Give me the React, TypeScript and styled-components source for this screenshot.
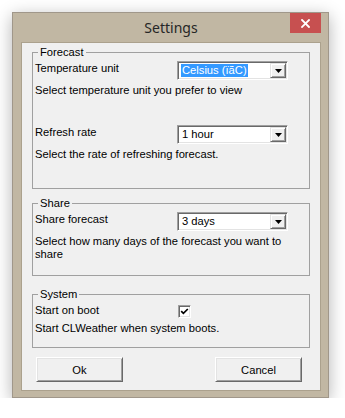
import React from "react";
import styled, { createGlobalStyle } from "styled-components";

const GlobalStyle = createGlobalStyle`
  html, body {
    margin: 0;
    background: #ffffff;
  }
  body {
    font-family: "Liberation Sans", Arial, sans-serif;
    font-size: 11.2px;
    color: #000;
  }
`;

export default function App() {
  return (
    <>
      <GlobalStyle />
      <Window>
        <TitleBar>
          <Title>Settings</Title>
          <CloseButton aria-label="Close">
            <svg width="9" height="9" viewBox="0 0 9 9">
              <path d="M1 1 L8 8 M8 1 L1 8" stroke="#fff" strokeWidth="1.8" strokeLinecap="square" />
            </svg>
          </CloseButton>
        </TitleBar>
        <Client>
          <Group $h={143} $mt={0}>
            <Legend>Forecast</Legend>
            <Setting $mt={0}>
              <Label>Temperature unit</Label>
              <Combo value="Celsius (ïãC)" selected />
              <Desc>Select temperature unit you prefer to view</Desc>
            </Setting>
            <Setting $mt={28}>
              <Label>Refresh rate</Label>
              <Combo value="1 hour" />
              <Desc>Select the rate of refreshing forecast.</Desc>
            </Setting>
          </Group>
          <Group $h={79} $mt={8}>
            <Legend>Share</Legend>
            <Setting $mt={0}>
              <Label>Share forecast</Label>
              <Combo value="3 days" />
              <Desc>
                Select how many days of the forecast you want to
                <br />
                share
              </Desc>
            </Setting>
          </Group>
          <Group $h={60} $mt={12}>
            <Legend>System</Legend>
            <Setting $mt={0}>
              <Label>Start on boot</Label>
              <CheckBox>
                <svg width="9" height="9" viewBox="0 0 9 9">
                  <path d="M1.2 4.2 L3.4 6.4 L7.8 2" stroke="#000" strokeWidth="1.7" fill="none" />
                </svg>
              </CheckBox>
              <Desc>Start CLWeather when system boots.</Desc>
            </Setting>
          </Group>
          <ButtonRow>
            <DialogButton>Ok</DialogButton>
            <DialogButton>Cancel</DialogButton>
          </ButtonRow>
        </Client>
      </Window>
    </>
  );
}

function Combo({ value, selected }: { value: string; selected?: boolean }) {
  return (
    <ComboBox>
      <ComboText>
        <ComboValue $selected={!!selected}>{value}</ComboValue>
      </ComboText>
      <DropButton>
        <svg width="7" height="4" viewBox="0 0 7 4">
          <polygon points="0,0 7,0 3.5,4" fill="#000" />
        </svg>
      </DropButton>
    </ComboBox>
  );
}

const Window = styled.div`
  margin: 12px 0 0 12px;
  width: 317px;
  box-sizing: border-box;
  background: #c1b7a3;
  border: 1px solid #a0978a;
  box-shadow: 0 4px 16px rgba(0, 0, 0, 0.3);
  display: flex;
  flex-direction: column;
  padding: 0 7px 6px 8px;
`;

const TitleBar = styled.div`
  height: 29px;
  display: grid;
  grid-template-columns: 1fr auto 1fr;
  align-items: center;
`;

const Title = styled.div`
  grid-column: 2;
  font-family: "Noto Sans", "Open Sans", sans-serif;
  font-size: 14px;
  color: #262626;
  line-height: 29px;
`;

const CloseButton = styled.button`
  grid-column: 3;
  justify-self: end;
  align-self: start;
  width: 31px;
  height: 20px;
  padding: 0;
  border: none;
  background: #c75050;
  display: flex;
  align-items: center;
  justify-content: center;
`;

const Client = styled.div`
  background: #f0f0f0;
  border: 1px solid #aba18d;
  padding: 3px 10px 8px 10px;
  display: flex;
  flex-direction: column;
`;

const Group = styled.fieldset<{ $h: number; $mt: number }>`
  margin: ${(p) => p.$mt}px 0 0;
  padding: 2px 6px 0 2px;
  border: 1px solid #a0a0a0;
  height: ${(p) => p.$h}px;
  box-sizing: border-box;
  min-width: 0;
`;

const Legend = styled.legend`
  padding: 0 2px;
  margin-left: 3px;
  line-height: 13px;
`;

const Setting = styled.div<{ $mt: number }>`
  display: grid;
  grid-template-columns: 142px 111px;
  row-gap: 4px;
  align-items: start;
  margin-top: ${(p) => p.$mt}px;
`;

const Label = styled.div`
  line-height: 13px;
  padding-top: 1px;
`;

const Desc = styled.div`
  grid-column: 1 / -1;
  line-height: 13px;
`;

const ComboBox = styled.div`
  width: 111px;
  height: 19px;
  box-sizing: border-box;
  background: #fff;
  border: 1px solid;
  border-color: #a0a0a0 #fff #fff #a0a0a0;
  box-shadow: inset 1px 1px 0 #696969, inset -1px -1px 0 #e3e3e3;
  padding: 1px;
  display: flex;
  align-items: stretch;
`;

const ComboText = styled.div`
  flex: 1;
  display: flex;
  align-items: center;
  padding-left: 2px;
`;

const ComboValue = styled.span<{ $selected: boolean }>`
  line-height: 13px;
  padding: 0 1px;
  background: ${(p) => (p.$selected ? "#3399ff" : "transparent")};
  color: ${(p) => (p.$selected ? "#fff" : "#000")};
`;

const DropButton = styled.div`
  width: 16px;
  box-sizing: border-box;
  background: #f0f0f0;
  border: 1px solid;
  border-color: #e3e3e3 #696969 #696969 #e3e3e3;
  box-shadow: inset 1px 1px 0 #fff, inset -1px -1px 0 #a0a0a0;
  display: flex;
  align-items: center;
  justify-content: center;
`;

const CheckBox = styled.div`
  width: 13px;
  height: 13px;
  margin: 2px 0 0 1px;
  box-sizing: border-box;
  background: #fff;
  border: 1px solid;
  border-color: #a0a0a0 #fff #fff #a0a0a0;
  box-shadow: inset 1px 1px 0 #696969, inset -1px -1px 0 #e3e3e3;
  display: flex;
  align-items: center;
  justify-content: center;
`;

const ButtonRow = styled.div`
  display: flex;
  justify-content: space-between;
  padding: 0 8px 0 4px;
  margin-top: 9px;
`;

const DialogButton = styled.button`
  width: 87px;
  height: 25px;
  box-sizing: border-box;
  background: #f0f0f0;
  border: 1px solid;
  border-color: #fff #696969 #696969 #fff;
  box-shadow: inset 1px 1px 0 #e3e3e3, inset -1px -1px 0 #a0a0a0;
  font-family: "Liberation Sans", Arial, sans-serif;
  font-size: 11.2px;
  color: #000;
  padding: 0;
`;
